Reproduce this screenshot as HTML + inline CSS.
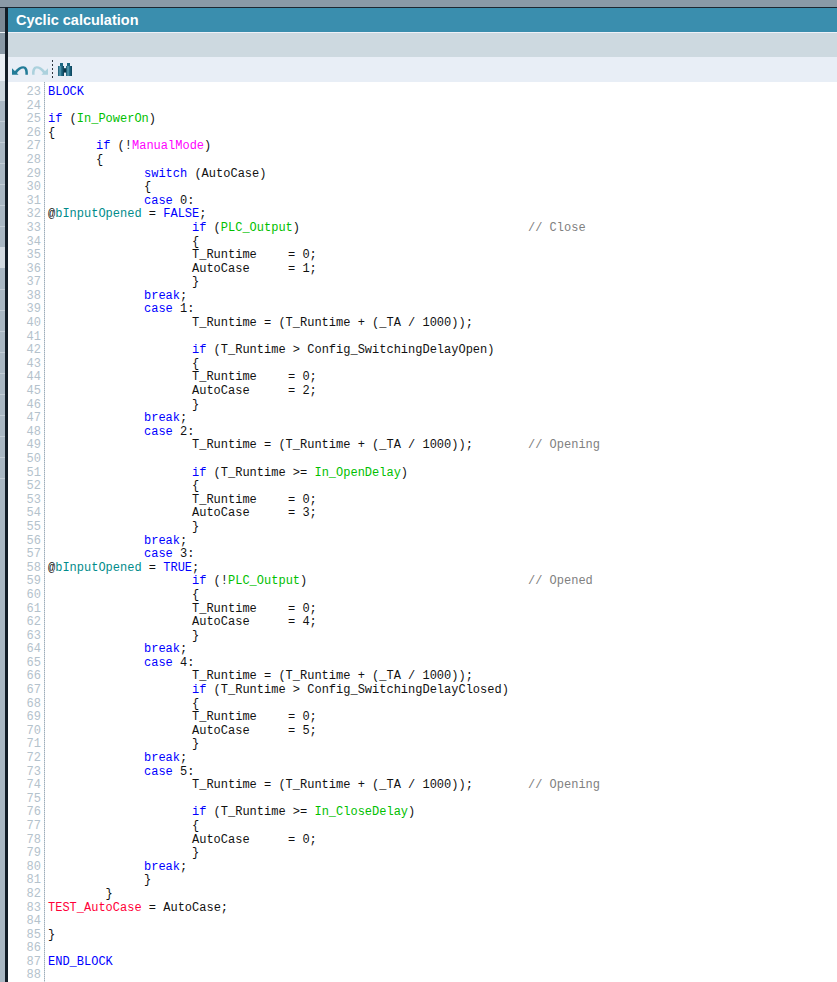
<!DOCTYPE html>
<html><head><meta charset="utf-8">
<style>
html,body{margin:0;padding:0;}
body{width:837px;height:982px;position:relative;overflow:hidden;background:#fff;font-family:"Liberation Sans",sans-serif;}
.topbar{position:absolute;left:0;top:0;width:837px;height:7px;background:#8a9aa7;}
.topline{position:absolute;left:0;top:7px;width:837px;height:1px;background:#1c2833;}
.lstrip{position:absolute;left:0;top:8px;width:5px;height:974px;background:#a9b7c3;}
.vline{position:absolute;left:5px;top:7px;width:3px;height:975px;background:#121c26;}
.title{position:absolute;left:8px;top:8px;width:829px;height:24px;background:#3a8eae;}
.title span{position:absolute;left:8px;top:4px;color:#fff;font-weight:bold;font-size:14.5px;white-space:nowrap;}
.tsep{position:absolute;left:8px;top:32px;width:829px;height:1px;background:#eef1f8;}
.graybar{position:absolute;left:8px;top:33px;width:829px;height:24px;background:#cdd9e0;}
.toolbar{position:absolute;left:8px;top:57px;width:829px;height:25px;background:#e8eef6;}
.code{position:absolute;left:8px;top:82px;width:829px;height:900px;background:#fff;}
.gutline{position:absolute;left:44px;top:82px;width:1px;height:900px;background:repeating-linear-gradient(to bottom,#9eadb9 0,#9eadb9 1px,#ccd6de 1px,#ccd6de 2px);}
.ln{position:absolute;left:10px;width:31px;text-align:right;height:14px;line-height:14px;font-family:"Liberation Mono",monospace;font-size:12px;color:#b4c2cc;white-space:pre;}
.cl{position:absolute;left:48px;height:14px;line-height:14px;font-family:"Liberation Mono",monospace;font-size:12px;color:#111;white-space:pre;tab-size:48px;-moz-tab-size:48px;}
.kw{color:#0000ff;}
.kw2{color:#0000ff;}
.g{color:#00c000;}
.m{color:#ff00ff;}
.t{color:#008b8b;}
.r{color:#ff0038;}
.c{color:#808080;}
</style></head><body>
<div class="topbar"></div>
<div class="topline"></div>
<div class="lstrip"></div>
<div style="position:absolute;left:0;top:8px;width:5px;height:24px;background:#7b8894"></div>
<div style="position:absolute;left:0;top:32px;width:5px;height:1px;background:#eef2f6"></div>
<div style="position:absolute;left:0;top:33px;width:5px;height:21px;background:#8898a5"></div>
<div style="position:absolute;left:0;top:54px;width:5px;height:27px;background:#e8eef4"></div>
<div style="position:absolute;left:0;top:81px;width:5px;height:20px;background:#cbd5dc"></div>
<div style="position:absolute;left:0;top:247px;width:5px;height:21px;background:#d2dae1"></div>
<div style="position:absolute;left:0;top:121px;width:5px;height:1px;background:#c2ccd5"></div><div style="position:absolute;left:0;top:142px;width:5px;height:1px;background:#c2ccd5"></div><div style="position:absolute;left:0;top:163px;width:5px;height:1px;background:#c2ccd5"></div><div style="position:absolute;left:0;top:184px;width:5px;height:1px;background:#c2ccd5"></div><div style="position:absolute;left:0;top:205px;width:5px;height:1px;background:#c2ccd5"></div><div style="position:absolute;left:0;top:226px;width:5px;height:1px;background:#c2ccd5"></div><div style="position:absolute;left:0;top:289px;width:5px;height:1px;background:#c2ccd5"></div><div style="position:absolute;left:0;top:310px;width:5px;height:1px;background:#c2ccd5"></div><div style="position:absolute;left:0;top:331px;width:5px;height:1px;background:#c2ccd5"></div><div style="position:absolute;left:0;top:352px;width:5px;height:1px;background:#c2ccd5"></div><div style="position:absolute;left:0;top:373px;width:5px;height:1px;background:#c2ccd5"></div><div style="position:absolute;left:0;top:394px;width:5px;height:1px;background:#c2ccd5"></div><div style="position:absolute;left:0;top:415px;width:5px;height:1px;background:#c2ccd5"></div><div style="position:absolute;left:0;top:436px;width:5px;height:1px;background:#c2ccd5"></div><div style="position:absolute;left:0;top:457px;width:5px;height:1px;background:#c2ccd5"></div><div style="position:absolute;left:0;top:478px;width:5px;height:1px;background:#c2ccd5"></div>
<div class="title"><span>Cyclic calculation</span></div>
<div class="tsep"></div>
<div class="graybar"></div>
<div class="toolbar"></div>
<svg style="position:absolute;left:0;top:0" width="837" height="90" viewBox="0 0 837 90">
<path d="M14.6 71.6 C17.2 67.8, 20.6 66.2, 23.2 66.2 C26.6 66.2, 28.2 69, 27.9 74.8 L25.4 74.8 C25.6 70.3, 24.6 68.4, 23 68.4 C21.2 68.4, 19 69.8, 16.6 73.6 Z" fill="#237c98"/>
<path d="M12 68.2 L12 74.8 L18.6 74.8 Z" fill="#237c98"/>
<path d="M45.4 71.6 C42.8 67.8, 39.4 66.2, 36.8 66.2 C33.4 66.2, 31.8 69, 32.1 74.8 L34.6 74.8 C34.4 70.3, 35.4 68.4, 37 68.4 C38.8 68.4, 41 69.8, 43.4 73.6 Z" fill="#abd1dd"/>
<path d="M48 68.2 L48 74.8 L41.4 74.8 Z" fill="#abd1dd"/>
<defs><linearGradient id="bg" x1="0" x2="1" y1="0" y2="0"><stop offset="0" stop-color="#175a73"/><stop offset="0.35" stop-color="#5a9fb5"/><stop offset="0.6" stop-color="#1f6a85"/><stop offset="1" stop-color="#0b4058"/></linearGradient></defs>
<g fill="#2c343c">
<rect x="52" y="60" width="1" height="2"/><rect x="52" y="64" width="1" height="2"/><rect x="52" y="68" width="1" height="2"/><rect x="52" y="72" width="1" height="2"/><rect x="52" y="76" width="1" height="2"/>
</g>
<g>
<rect x="60" y="63" width="3" height="3.2" fill="#1a6580"/>
<rect x="67" y="63" width="3" height="3.2" fill="#1a6580"/>
<rect x="58" y="66" width="6" height="10" fill="url(#bg)"/>
<rect x="66" y="66" width="6" height="10" fill="url(#bg)"/>
<rect x="63.8" y="68.2" width="2.4" height="4.4" fill="#083446"/>
</g>
</svg>
<div class="code"></div>
<div class="vline"></div>
<div class="gutline"></div>
<div class="ln" style="top:85.00px">23</div><div class="cl" style="top:85.00px"><span class="kw2">BLOCK</span></div>
<div class="ln" style="top:98.59px">24</div><div class="cl" style="top:98.59px"></div>
<div class="ln" style="top:112.18px">25</div><div class="cl" style="top:112.18px"><span class="kw">if</span> (<span class="g">In_PowerOn</span>)</div>
<div class="ln" style="top:125.78px">26</div><div class="cl" style="top:125.78px">{</div>
<div class="ln" style="top:139.37px">27</div><div class="cl" style="top:139.37px">	<span class="kw">if</span> (!<span class="m">ManualMode</span>)</div>
<div class="ln" style="top:152.96px">28</div><div class="cl" style="top:152.96px">	{</div>
<div class="ln" style="top:166.55px">29</div><div class="cl" style="top:166.55px">		<span class="kw">switch</span> (AutoCase)</div>
<div class="ln" style="top:180.14px">30</div><div class="cl" style="top:180.14px">		{</div>
<div class="ln" style="top:193.74px">31</div><div class="cl" style="top:193.74px">		<span class="kw">case</span> 0:</div>
<div class="ln" style="top:207.33px">32</div><div class="cl" style="top:207.33px">@<span class="t">bInputOpened</span> = <span class="kw">FALSE</span>;</div>
<div class="ln" style="top:220.92px">33</div><div class="cl" style="top:220.92px">			<span class="kw">if</span> (<span class="g">PLC_Output</span>)					<span class="c">// Close</span></div>
<div class="ln" style="top:234.51px">34</div><div class="cl" style="top:234.51px">			{</div>
<div class="ln" style="top:248.10px">35</div><div class="cl" style="top:248.10px">			T_Runtime	= 0;</div>
<div class="ln" style="top:261.70px">36</div><div class="cl" style="top:261.70px">			AutoCase	= 1;</div>
<div class="ln" style="top:275.29px">37</div><div class="cl" style="top:275.29px">			}</div>
<div class="ln" style="top:288.88px">38</div><div class="cl" style="top:288.88px">		<span class="kw">break</span>;</div>
<div class="ln" style="top:302.47px">39</div><div class="cl" style="top:302.47px">		<span class="kw">case</span> 1:</div>
<div class="ln" style="top:316.06px">40</div><div class="cl" style="top:316.06px">			T_Runtime = (T_Runtime + (_TA / 1000));</div>
<div class="ln" style="top:329.66px">41</div><div class="cl" style="top:329.66px"></div>
<div class="ln" style="top:343.25px">42</div><div class="cl" style="top:343.25px">			<span class="kw">if</span> (T_Runtime &gt; Config_SwitchingDelayOpen)</div>
<div class="ln" style="top:356.84px">43</div><div class="cl" style="top:356.84px">			{</div>
<div class="ln" style="top:370.43px">44</div><div class="cl" style="top:370.43px">			T_Runtime	= 0;</div>
<div class="ln" style="top:384.02px">45</div><div class="cl" style="top:384.02px">			AutoCase	= 2;</div>
<div class="ln" style="top:397.62px">46</div><div class="cl" style="top:397.62px">			}</div>
<div class="ln" style="top:411.21px">47</div><div class="cl" style="top:411.21px">		<span class="kw">break</span>;</div>
<div class="ln" style="top:424.80px">48</div><div class="cl" style="top:424.80px">		<span class="kw">case</span> 2:</div>
<div class="ln" style="top:438.39px">49</div><div class="cl" style="top:438.39px">			T_Runtime = (T_Runtime + (_TA / 1000));		<span class="c">// Opening</span></div>
<div class="ln" style="top:451.98px">50</div><div class="cl" style="top:451.98px"></div>
<div class="ln" style="top:465.58px">51</div><div class="cl" style="top:465.58px">			<span class="kw">if</span> (T_Runtime &gt;= <span class="g">In_OpenDelay</span>)</div>
<div class="ln" style="top:479.17px">52</div><div class="cl" style="top:479.17px">			{</div>
<div class="ln" style="top:492.76px">53</div><div class="cl" style="top:492.76px">			T_Runtime	= 0;</div>
<div class="ln" style="top:506.35px">54</div><div class="cl" style="top:506.35px">			AutoCase	= 3;</div>
<div class="ln" style="top:519.94px">55</div><div class="cl" style="top:519.94px">			}</div>
<div class="ln" style="top:533.54px">56</div><div class="cl" style="top:533.54px">		<span class="kw">break</span>;</div>
<div class="ln" style="top:547.13px">57</div><div class="cl" style="top:547.13px">		<span class="kw">case</span> 3:</div>
<div class="ln" style="top:560.72px">58</div><div class="cl" style="top:560.72px">@<span class="t">bInputOpened</span> = <span class="kw">TRUE</span>;</div>
<div class="ln" style="top:574.31px">59</div><div class="cl" style="top:574.31px">			<span class="kw">if</span> (!<span class="g">PLC_Output</span>)					<span class="c">// Opened</span></div>
<div class="ln" style="top:587.90px">60</div><div class="cl" style="top:587.90px">			{</div>
<div class="ln" style="top:601.50px">61</div><div class="cl" style="top:601.50px">			T_Runtime	= 0;</div>
<div class="ln" style="top:615.09px">62</div><div class="cl" style="top:615.09px">			AutoCase	= 4;</div>
<div class="ln" style="top:628.68px">63</div><div class="cl" style="top:628.68px">			}</div>
<div class="ln" style="top:642.27px">64</div><div class="cl" style="top:642.27px">		<span class="kw">break</span>;</div>
<div class="ln" style="top:655.86px">65</div><div class="cl" style="top:655.86px">		<span class="kw">case</span> 4:</div>
<div class="ln" style="top:669.46px">66</div><div class="cl" style="top:669.46px">			T_Runtime = (T_Runtime + (_TA / 1000));</div>
<div class="ln" style="top:683.05px">67</div><div class="cl" style="top:683.05px">			<span class="kw">if</span> (T_Runtime &gt; Config_SwitchingDelayClosed)</div>
<div class="ln" style="top:696.64px">68</div><div class="cl" style="top:696.64px">			{</div>
<div class="ln" style="top:710.23px">69</div><div class="cl" style="top:710.23px">			T_Runtime	= 0;</div>
<div class="ln" style="top:723.82px">70</div><div class="cl" style="top:723.82px">			AutoCase	= 5;</div>
<div class="ln" style="top:737.42px">71</div><div class="cl" style="top:737.42px">			}</div>
<div class="ln" style="top:751.01px">72</div><div class="cl" style="top:751.01px">		<span class="kw">break</span>;</div>
<div class="ln" style="top:764.60px">73</div><div class="cl" style="top:764.60px">		<span class="kw">case</span> 5:</div>
<div class="ln" style="top:778.19px">74</div><div class="cl" style="top:778.19px">			T_Runtime = (T_Runtime + (_TA / 1000));		<span class="c">// Opening</span></div>
<div class="ln" style="top:791.78px">75</div><div class="cl" style="top:791.78px"></div>
<div class="ln" style="top:805.38px">76</div><div class="cl" style="top:805.38px">			<span class="kw">if</span> (T_Runtime &gt;= <span class="g">In_CloseDelay</span>)</div>
<div class="ln" style="top:818.97px">77</div><div class="cl" style="top:818.97px">			{</div>
<div class="ln" style="top:832.56px">78</div><div class="cl" style="top:832.56px">			AutoCase	= 0;</div>
<div class="ln" style="top:846.15px">79</div><div class="cl" style="top:846.15px">			}</div>
<div class="ln" style="top:859.74px">80</div><div class="cl" style="top:859.74px">		<span class="kw">break</span>;</div>
<div class="ln" style="top:873.34px">81</div><div class="cl" style="top:873.34px">		}</div>
<div class="ln" style="top:886.93px">82</div><div class="cl" style="top:886.93px">        }</div>
<div class="ln" style="top:900.52px">83</div><div class="cl" style="top:900.52px"><span class="r">TEST_AutoCase</span> = AutoCase;</div>
<div class="ln" style="top:914.11px">84</div><div class="cl" style="top:914.11px"></div>
<div class="ln" style="top:927.70px">85</div><div class="cl" style="top:927.70px">}</div>
<div class="ln" style="top:941.30px">86</div><div class="cl" style="top:941.30px"></div>
<div class="ln" style="top:954.89px">87</div><div class="cl" style="top:954.89px"><span class="kw2">END_BLOCK</span></div>
<div class="ln" style="top:968.48px">88</div><div class="cl" style="top:968.48px"></div>
</body></html>
